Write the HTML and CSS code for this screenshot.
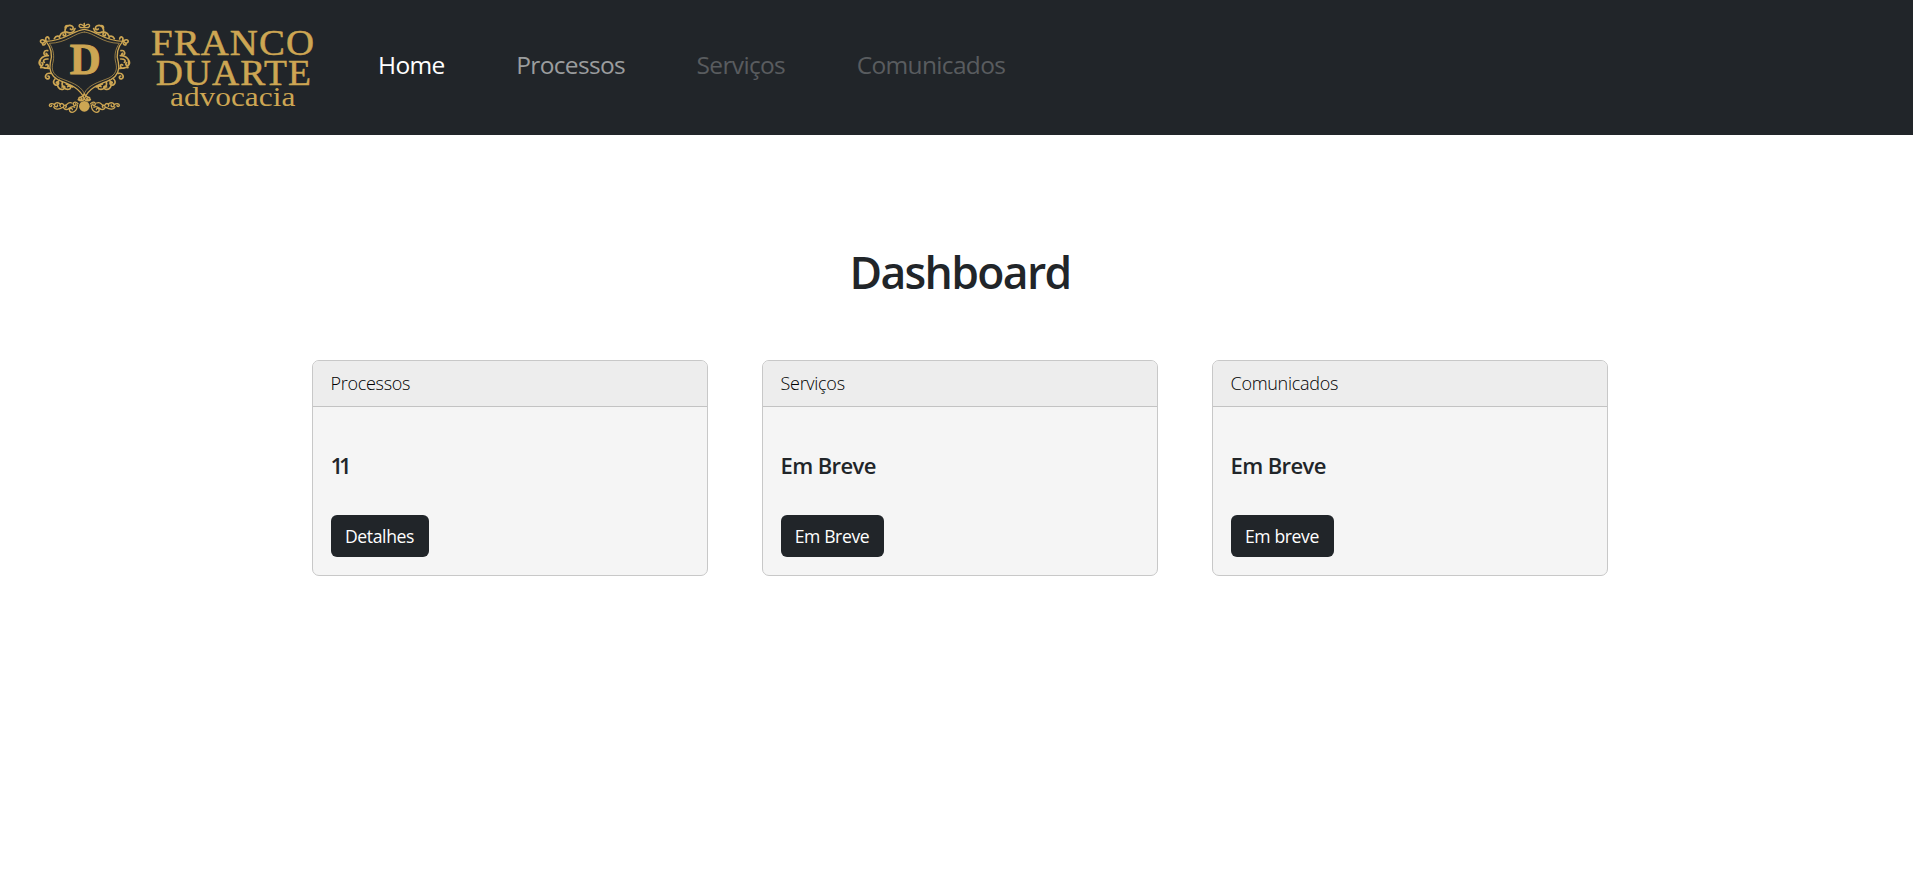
FILE: index.html
```html
<!DOCTYPE html>
<html lang="pt-BR">
<head>
<meta charset="utf-8">
<title>Dashboard</title>
<link rel="stylesheet" href="styles.css">
</head>
<body>
<header class="navbar">
  <svg class="brand" viewBox="0 0 930 360" role="img" aria-label="Franco Duarte advocacia">
    <defs>
      <g id="half" fill="none" stroke="#cda653" stroke-linecap="round">
        <path stroke-width="4" d="M193 58C160 61 137 92 78 94C94 113 98 135 91 157C87 176 92 196 113 209C145 222 180 232 193 267"/>
        <path stroke-width="2" d="M193 66C162 69 141 99 88 100C101 118 104 140 98 161C94 179 99 193 119 204C151 217 181 224 193 250"/>
        <path stroke-width="5" d="M78 94C74 79 86 77 87 87M76 94C64 82 56 96 66 99M76 95C61 100 70 111 76 101"/>
        <path stroke-width="5" d="M119 79C124 65 136 64 137 72C138 80 127 79 130 73M136 70C132 52 143 44 153 47C165 50 158 64 151 57M140 66C150 72 162 68 165 56M103 86C108 76 119 76 119 84M146 48C138 44 134 50 136 56"/>
        <path stroke-width="4" d="M193 52C178 56 173 46 181 43C188 42 188 49 193 49V40"/>
        <path stroke-width="5" d="M83 122C72 119 68 133 76 136C82 137 82 130 78 130M85 137C64 136 54 156 59 164C64 172 73 162 66 158M61 151C54 164 66 178 81 173C89 169 82 160 78 165M84 147C72 146 67 153 73 157M88 175C77 176 67 170 62 173"/>
        <path stroke-width="5" d="M91 190C77 188 73 201 80 206C88 209 91 199 84 198M105 207C94 219 108 231 115 223C119 216 109 213 109 219M117 211C106 229 119 242 131 237C140 231 129 224 126 231M127 217C123 231 137 241 149 237C157 231 146 225 143 230M139 222C145 226 154 224 157 231"/>
        <path stroke-width="5" d="M193 252C188 266 174 259 177 267C180 274 189 267 184 264M193 267C190 273 180 274 175 269"/>
        <path stroke-width="4" d="M174 281C166 272 157 278 161 285C165 289 170 284 167 281M172 285C172 304 156 312 149 303C146 295 157 292 157 299M164 292C157 286 150 293 143 298C134 300 127 293 132 287C137 283 142 290 137 292M156 279C140 272 143 291 132 286C125 275 116 284 121 289M122 283C114 275 102 278 104 287C107 294 115 289 112 285M128 292C115 300 104 298 101 291M103 284C97 279 88 281 88 286C89 291 96 290 95 286"/>
      </g>
    </defs>
    <use href="#half"/>
    <use href="#half" transform="translate(386 0) scale(-1 1)"/>
    <circle cx="193" cy="289" r="16" fill="#cda653"/>
    <text class="brand-initial" x="149" y="193" font-size="136" textLength="93" lengthAdjust="spacingAndGlyphs">D</text>
    <g class="brand-name">
      <text x="393" y="135" font-size="105" textLength="492" lengthAdjust="spacingAndGlyphs">FRANCO</text>
      <text x="407" y="225" font-size="105" textLength="469" lengthAdjust="spacingAndGlyphs">DUARTE</text>
      <text class="brand-sub" x="450" y="287" font-size="80" textLength="376" lengthAdjust="spacingAndGlyphs">advocacia</text>
    </g>
  </svg>
  <nav class="links">
    <a class="link active">Home</a>
    <a class="link">Processos</a>
    <a class="link disabled">Serviços</a>
    <a class="link disabled">Comunicados</a>
  </nav>
</header>
<main class="content">
  <h1 class="title">Dashboard</h1>
  <div class="cards">
    <section class="card">
      <div class="card-header">Processos</div>
      <div class="card-body"><h5 class="card-title count">11</h5><button class="btn">Detalhes</button></div>
    </section>
    <section class="card">
      <div class="card-header">Serviços</div>
      <div class="card-body"><h5 class="card-title">Em Breve</h5><button class="btn btn-wide">Em Breve</button></div>
    </section>
    <section class="card">
      <div class="card-header">Comunicados</div>
      <div class="card-body"><h5 class="card-title">Em Breve</h5><button class="btn btn-wide">Em breve</button></div>
    </section>
  </div>
</main>
</body>
</html>
```
FILE: styles.css
```css
* { box-sizing: border-box; }
body {
  margin: 0;
  background: #fff;
  color: #212529;
  font: 18px/27px "Open Sans", "Noto Sans", sans-serif;
}
.navbar {
  display: flex;
  align-items: flex-start;
  height: 135px;
  padding: 10px 20px 0;
  background: #212529;
}
.brand { width: 310px; height: 120px; flex: none; }
.brand-name { font-family: "Liberation Serif", serif; letter-spacing: 3px; fill: #cda653; stroke: #cda653; stroke-width: 1.5; }
.brand-sub { letter-spacing: 0; stroke: none; }
.brand-initial { font-family: "Liberation Serif", serif; font-weight: 700; fill: #cda653; stroke: #cda653; stroke-width: 3; }
.links { display: flex; gap: 71.6px; padding: 36px 0 0 48px; }
.link { font-size: 24.5px; line-height: 38px; letter-spacing: -0.027em; color: #9b9d9e; }
.link.active { color: #fff; }
.link.disabled { color: #595c5f; }
.content { width: 1296px; margin: 0 auto; padding-top: 107px; }
.title {
  margin: 0 0 58px;
  padding-left: 7px;
  font-size: 44.5px;
  line-height: 60px;
  font-weight: 600;
  letter-spacing: -0.037em;
  text-align: center;
}
.cards { display: grid; grid-template-columns: repeat(3, 396px); gap: 54px; padding-left: 3px; }
.card { height: 216px; border: 1px solid #c8c8c8; border-radius: 7px; background: #f5f5f5; overflow: hidden; }
.card-header {
  height: 46px;
  padding: 9px 18px;
  border-bottom: 1px solid #c3c3c3;
  background: #ededed;
  color: #000;
  font-weight: 300;
  letter-spacing: -0.016em;
}
.card-body { padding: 45px 18px 18px; }
.card-title { margin: 0 0 36px; font-size: 22px; line-height: 27px; font-weight: 600; letter-spacing: -0.027em; }
.count { letter-spacing: -0.19em; }
.btn {
  display: block;
  width: 98px;
  height: 42px;
  padding: 0;
  border: 0;
  border-radius: 6px;
  background: #212529;
  color: #fff;
  font: inherit;
  font-size: 17.6px;
  letter-spacing: -0.022em;
}
.btn-wide { width: 103px; }
```
